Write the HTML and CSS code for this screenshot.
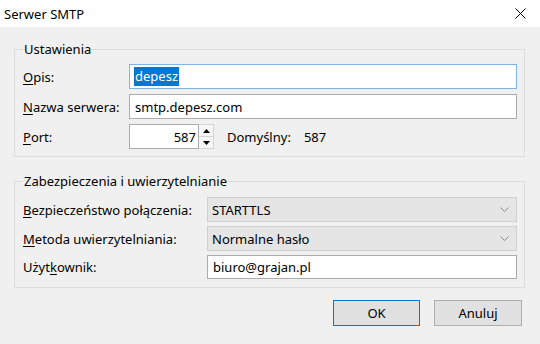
FILE: index.html
```html
<!DOCTYPE html>
<html lang="pl">
<head>
    <meta charset="UTF-8">
    <title>Serwer SMTP</title>
    <link rel="stylesheet" href="styles.css">
</head>
<body>
    <div class="dialog">
        <header class="titlebar">
            <span class="title">Serwer SMTP</span>
            <svg class="close" width="11" height="11" viewBox="0 0 11 11">
                <path d="M0.5 0.5 L10.5 10.5 M10.5 0.5 L0.5 10.5" stroke="#000" stroke-width="1" fill="none"/>
            </svg>
        </header>

        <div class="content">
            <fieldset class="group settings">
                <legend>Ustawienia</legend>
                <div class="grid">
                    <label><u>O</u>pis:</label>
                    <div class="field focused"><span class="selected">depesz</span></div>

                    <label><u>N</u>azwa serwera:</label>
                    <div class="field">smtp.depesz.com</div>

                    <label><u>P</u>ort:</label>
                    <div class="port-row">
                        <div class="field port">587</div>
                        <div class="spin">
                            <span class="spin-btn"><svg width="7" height="4" viewBox="0 0 7 4"><path d="M3.5 0 L7 4 L0 4 Z" fill="#000"/></svg></span>
                            <span class="spin-btn"><svg width="7" height="4" viewBox="0 0 7 4"><path d="M0 0 L7 0 L3.5 4 Z" fill="#000"/></svg></span>
                        </div>
                        <span class="default-label">Domyślny:</span>
                        <span class="default-value">587</span>
                    </div>
                </div>
            </fieldset>

            <fieldset class="group security">
                <legend>Zabezpieczenia i uwierzytelnianie</legend>
                <div class="grid">
                    <label><u>B</u>ezpieczeństwo połączenia:</label>
                    <div class="field select">STARTTLS<svg class="chevron" width="9" height="5" viewBox="0 0 9 5"><path d="M0.5 0.5 L4.5 4.5 L8.5 0.5" stroke="#8a8a8a" fill="none"/></svg></div>

                    <label><u>M</u>etoda uwierzytelniania:</label>
                    <div class="field select">Normalne hasło<svg class="chevron" width="9" height="5" viewBox="0 0 9 5"><path d="M0.5 0.5 L4.5 4.5 L8.5 0.5" stroke="#8a8a8a" fill="none"/></svg></div>

                    <label>Użyt<u>k</u>ownik:</label>
                    <div class="field">biuro@grajan.pl</div>
                </div>
            </fieldset>

            <div class="buttons">
                <button class="btn default">OK</button>
                <button class="btn">Anuluj</button>
            </div>
        </div>
    </div>
</body>
</html>
```

FILE: styles.css
```css
* {
    margin: 0;
    padding: 0;
    box-sizing: border-box;
}

body {
    font-family: 'Noto Sans', 'Segoe UI', sans-serif;
    font-size: 13px;
    color: #000;
    background: #f0f0f0;
    width: 540px;
    height: 344px;
    overflow: hidden;
}

/* Title bar */
.titlebar {
    height: 27px;
    background: #fff;
    display: flex;
    justify-content: space-between;
    align-items: center;
    padding: 0 14px 0 4px;
}

/* Group boxes */
.group {
    border: 1px solid #dcdcdc;
    margin: 0 15px 0 14px;
    padding: 0 7px 7px 8px;
}

.group legend {
    padding: 0 1px;
    line-height: 16px;
}

.settings {
    margin-top: 14px;
}

.security {
    margin-top: 16px;
    padding-bottom: 8px;
}

.grid {
    display: grid;
    align-items: center;
    row-gap: 5px;
}

.settings .grid {
    grid-template-columns: 106px 1fr;
    grid-template-rows: 25px 25px 25px;
    padding-top: 7px;
}

.security .grid {
    grid-template-columns: 184px 1fr;
    grid-template-rows: 25px 25px 24px;
    padding-top: 8px;
    row-gap: 4px;
}

label {
    white-space: nowrap;
}

label u {
    text-decoration-thickness: 1px;
    text-underline-offset: 2px;
}

/* Fields */
.field {
    height: 100%;
    background: #fff;
    border: 1px solid #acacac;
    display: flex;
    align-items: center;
    padding: 0 5px;
}

.field.focused {
    border-color: #7eb4ea;
}

.selected {
    background: #0078d7;
    color: #fff;
    padding: 0 1px 1px;
    margin-left: -1px;
}

.select {
    background: #e5e5e5;
    border-color: #cfcfcf;
    justify-content: space-between;
    padding: 0 4px;
}

.chevron {
    margin-right: 3px;
}

/* Port row */
.port-row {
    display: flex;
    align-items: center;
    height: 100%;
}

.port {
    width: 70px;
    justify-content: flex-end;
    padding-right: 2px;
}

.spin {
    display: flex;
    flex-direction: column;
    width: 15px;
    height: 100%;
    border: 1px solid #d4d4d4;
    border-left: none;
    background: #f0f0f0;
}

.spin-btn {
    flex: 1;
    display: flex;
    align-items: center;
    justify-content: center;
    background: #f7f7f7;
}

.spin-btn + .spin-btn {
    border-top: 1px solid #d4d4d4;
}

.default-label {
    margin-left: 13px;
}

.default-value {
    margin-left: 13px;
}

/* Buttons */
.buttons {
    display: flex;
    justify-content: flex-end;
    gap: 14px;
    margin: 12px 18px 0 0;
}

.btn {
    width: 88px;
    height: 26px;
    font: inherit;
    background: #e1e1e1;
    border: 1px solid #adadad;
}

.btn.default {
    width: 87px;
    border-color: #0078d7;
}
```
